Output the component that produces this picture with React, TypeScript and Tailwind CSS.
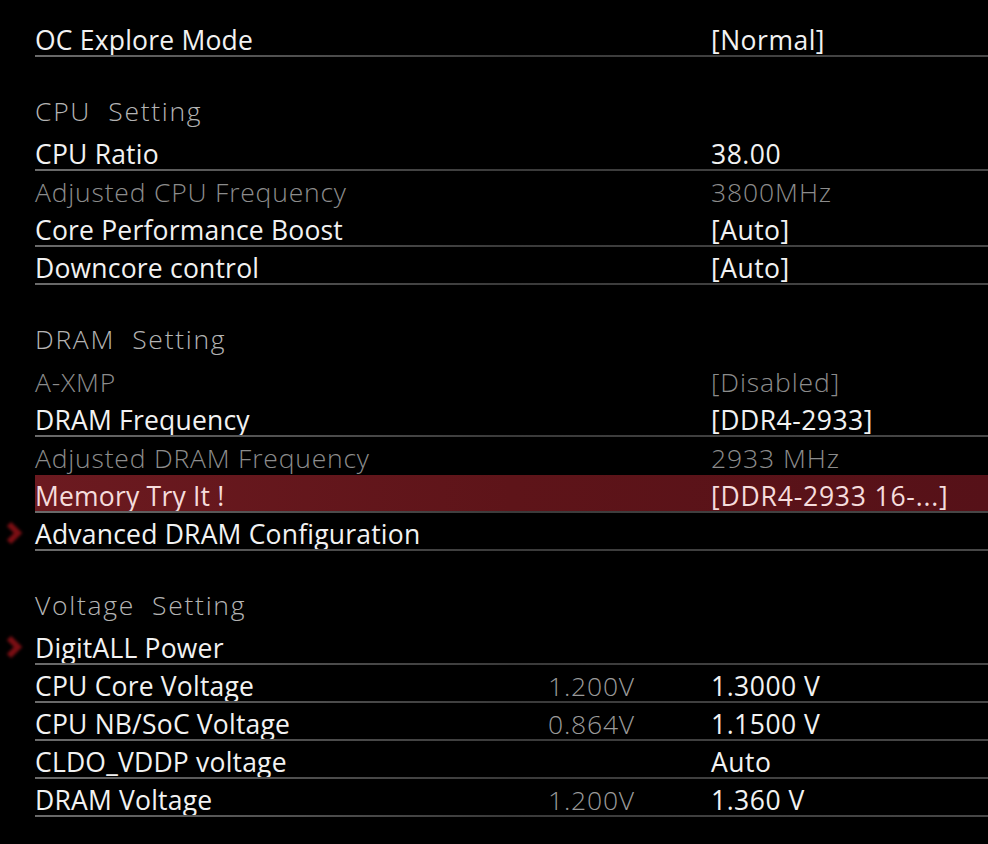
type Kind = "item" | "disabled" | "header" | "blank";

interface Row {
  kind: Kind;
  label?: string;
  current?: string;
  value?: string;
  line?: boolean;
  selected?: boolean;
  submenu?: boolean;
}

const ROWS: Row[] = [
  { kind: "item", label: "OC Explore Mode", value: "[Normal]", line: true },
  { kind: "blank" },
  { kind: "header", label: "CPU  Setting" },
  { kind: "item", label: "CPU Ratio", value: "38.00", line: true },
  { kind: "disabled", label: "Adjusted CPU Frequency", value: "3800MHz" },
  { kind: "item", label: "Core Performance Boost", value: "[Auto]", line: true },
  { kind: "item", label: "Downcore control", value: "[Auto]", line: true },
  { kind: "blank" },
  { kind: "header", label: "DRAM  Setting" },
  { kind: "disabled", label: "A-XMP", value: "[Disabled]" },
  { kind: "item", label: "DRAM Frequency", value: "[DDR4-2933]", line: true },
  { kind: "disabled", label: "Adjusted DRAM Frequency", value: "2933 MHz" },
  { kind: "item", label: "Memory Try It !", value: "[DDR4-2933 16-...]", line: true, selected: true },
  { kind: "item", label: "Advanced DRAM Configuration", line: true, submenu: true },
  { kind: "blank" },
  { kind: "header", label: "Voltage  Setting" },
  { kind: "item", label: "DigitALL Power", line: true, submenu: true },
  { kind: "item", label: "CPU Core Voltage", current: "1.200V", value: "1.3000 V", line: true },
  { kind: "item", label: "CPU NB/SoC Voltage", current: "0.864V", value: "1.1500 V", line: true },
  { kind: "item", label: "CLDO_VDDP voltage", value: "Auto", line: true },
  { kind: "item", label: "DRAM Voltage", current: "1.200V", value: "1.360 V", line: true },
];

function Chevron() {
  return (
    <svg width="20" height="24" viewBox="0 0 20 24" className="blur-[1.4px]">
      <path d="M5 3 L14 12 L5 21" fill="none" stroke="#7a0e13" strokeWidth="6" strokeLinejoin="miter" />
    </svg>
  );
}

function SettingRow({ row }: { row: Row }) {
  if (row.kind === "blank") return <div className="h-[38px]" />;

  const labelClass =
    row.kind === "header"
      ? "font-light text-[#b4b4b4] tracking-[1.7px] leading-[33px]"
      : row.kind === "disabled"
        ? "font-light text-[#8c8c8c] tracking-[0.8px] leading-[42px]"
        : row.selected
          ? "text-[#f5dcdc] tracking-[0.2px] leading-[42px]"
          : "text-[#f2f2f2] tracking-[0.2px] leading-[42px]";

  const valueClass =
    row.kind === "disabled"
      ? "font-light text-[#8c8c8c] tracking-[0.9px]"
      : row.selected
        ? "text-[#f5dcdc] tracking-[0.8px]"
        : "text-[#f2f2f2] tracking-[0.5px]";

  return (
    <div className="flex flex-col">
      <div className="flex h-[36px]">
        <div className="w-[35px] flex items-center justify-center pr-[8px] pt-[3px]">
          {row.submenu && <Chevron />}
        </div>
        <div
          className={
            "flex flex-1 h-full " +
            (row.selected
              ? "bg-gradient-to-r from-[#6c1a20] via-[#5e1419] to-[#561118]"
              : "")
          }
        >
          <div className={"w-[513px] whitespace-pre " + labelClass}>{row.label}</div>
          <div className="w-[163px] leading-[42px] font-light text-[#9a9a9a] tracking-[0.8px]">
            {row.current}
          </div>
          <div className={"flex-1 leading-[42px] whitespace-pre " + valueClass}>{row.value}</div>
        </div>
      </div>
      <div className="h-[2px] ml-[35px]">
        {row.line && (
          <div className="h-full bg-gradient-to-r from-[#6b6b6b] via-[#3a3a3a] to-[#474747]" />
        )}
      </div>
    </div>
  );
}

export default function App() {
  return (
    <div
      className="w-[988px] h-[844px] bg-black pt-[19px] overflow-hidden text-[26.5px]"
      style={{ fontFamily: '"Open Sans", "DejaVu Sans", sans-serif' }}
    >
      {ROWS.map((row, i) => (
        <SettingRow key={i} row={row} />
      ))}
    </div>
  );
}
